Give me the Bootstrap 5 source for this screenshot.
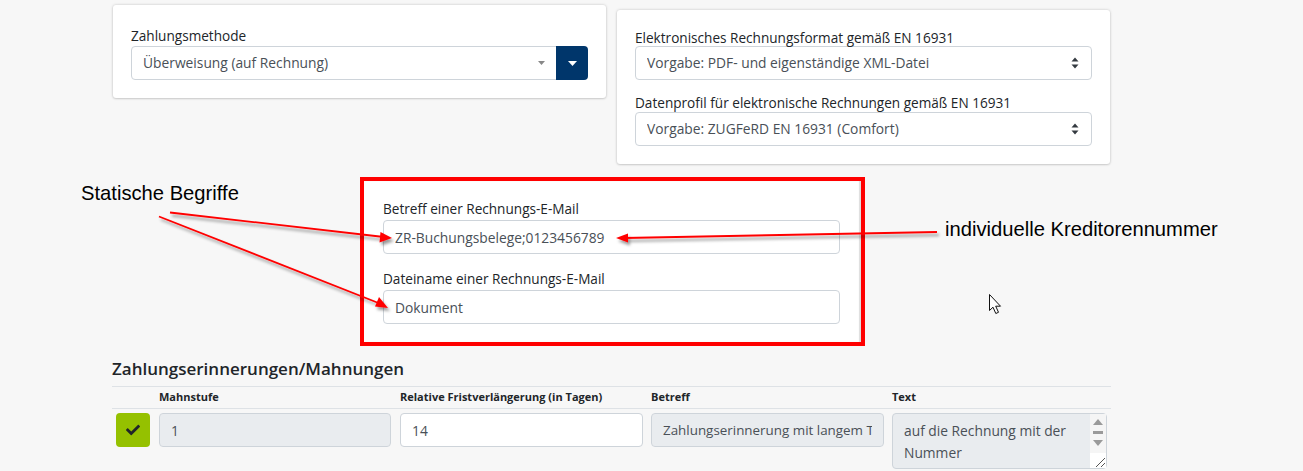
<!DOCTYPE html>
<html lang="de">
<head>
<meta charset="utf-8">
<title>Rechnungseinstellungen</title>
<link href="https://cdn.jsdelivr.net/npm/bootstrap@5.3.0/dist/css/bootstrap.min.css" rel="stylesheet">
<style>
html,body{height:471px;overflow:hidden}
body{background:#f7f7f7;font-family:"Open Sans","Noto Sans",sans-serif;font-size:13.6px;color:#212529;position:relative}
.page-wrap{width:999px;margin-left:112px}
.top-row{display:grid;grid-template-columns:493px 493px;column-gap:11px;align-items:start;margin-left:1px}
.pane{background:#fff;border:0;border-radius:3px;box-shadow:0 0 3px rgba(0,0,0,.2),0 1px 2px rgba(0,0,0,.1);padding:18px}
.pane-a{margin-top:5px;height:93px;padding-top:22px}
.pane-a .fld-label{margin-bottom:1px}
.pane-b{margin-top:10px;height:154px}
.pane-b .grp:first-child .fld-label{line-height:20px}
.fld-label{display:block;line-height:18px;margin:0;height:18px;font-size:13.6px;white-space:nowrap}
.ctl{height:34px;font-size:13.8px;line-height:20px;padding:6px 11px;color:#495057;border:1px solid #ced4da;border-radius:4px;background-color:#fff;box-shadow:none;font-family:inherit}
.ctl:disabled,.ctl[readonly].ctl-grey{background-color:#e9ecef;color:#495057;opacity:1}
.ctl-tight{font-size:13.4px}
select.ctl{padding-right:30px;background-size:8px 12px;background-position:right 12px center;background-repeat:no-repeat;background-image:url("data:image/svg+xml,%3csvg xmlns='http://www.w3.org/2000/svg' viewBox='0 0 8 12'%3e%3cpath fill='%23343a40' d='M4 0.5 7.500 4.500H.5zM4 11.500.5 7.500h7z'/%3e%3c/svg%3e")}
select.ctl-small{background-size:7px 4px;background-position:right 11px center;background-image:url("data:image/svg+xml,%3csvg xmlns='http://www.w3.org/2000/svg' viewBox='0 0 7 4'%3e%3cpath fill='%23888' d='M0 0h7L3.500 4z'/%3e%3c/svg%3e")}
.drop-btn{width:32px;height:34px;background:#00366b;border:0;border-radius:0 4px 4px 0;padding:0;display:flex;align-items:center;justify-content:center}
.drop-btn:hover{background:#00366b}
.frame{width:505px;height:169px;margin:13px 0 0 248px;border:4px solid #f00;background:#fff;padding:19px 21px 0 19px;box-shadow:inset -2px 0 1px #ddd}
.frame .fld-label{margin-bottom:2px}
.frame .grp{margin-bottom:16px}
.pane-b .grp{margin-bottom:14px}
.section-title{font-size:17px;font-weight:600;line-height:22px;margin:12px 0 6px;color:#212529;height:22px}
.rem-table{width:999px;table-layout:fixed;margin:0;--bs-table-bg:transparent;border-color:#dee2e6}
.rem-table th{font-size:11px;font-weight:700;line-height:16px;padding:2px 4px 3px;border-top:1px solid #dee2e6;border-bottom:1px solid #dee2e6;white-space:nowrap}
.rem-table td{padding:4px;border:0;vertical-align:top}
.rem-table td:nth-child(2){padding-right:5px}
.col-a{width:43px}.col-b{width:241px}.col-c{width:251px}.col-d{width:241px}
.ok-btn{width:34px;height:34px;margin-left:0;background:#95c100;border:0;border-radius:4px;padding:0;display:flex;align-items:center;justify-content:center}
.ok-btn:hover{background:#95c100}
.area-wrap{position:relative;width:215px;height:56px}
.area-wrap textarea{height:56px;width:215px;resize:none;overflow:hidden;padding:6px 30px 6px 11px;line-height:22px;background:#e9ecef}
.scroll-art{position:absolute;right:1px;top:1px;width:16px;height:54px}
.overlay{position:absolute;left:0;top:0;width:1303px;height:471px;pointer-events:none}
.note{position:absolute;font-family:"Liberation Sans",Arial,sans-serif;font-size:20.2px;line-height:22px;color:#000;white-space:nowrap}
.note-a{left:81px;top:182px}
.note-b{left:945px;top:218px}
</style>
</head>
<body>
<div class="page-wrap">
  <div class="top-row">
    <div class="pane pane-a">
      <label class="fld-label" for="zm">Zahlungsmethode</label>
      <div class="input-group flex-nowrap">
        <select id="zm" class="form-select ctl ctl-small"><option>Überweisung (auf Rechnung)</option></select>
        <button class="btn drop-btn" type="button" aria-label="Auswahl öffnen"><svg width="9" height="5" viewBox="0 0 9 5"><path fill="#fff" d="M0 0h9L4.500 5z"/></svg></button>
      </div>
    </div>
    <div class="pane pane-b">
      <div class="grp">
        <label class="fld-label" for="fmt">Elektronisches Rechnungsformat gemäß EN 16931</label>
        <select id="fmt" class="form-select ctl"><option>Vorgabe: PDF- und eigenständige XML-Datei</option></select>
      </div>
      <div class="grp">
        <label class="fld-label" for="prof">Datenprofil für elektronische Rechnungen gemäß EN 16931</label>
        <select id="prof" class="form-select ctl"><option>Vorgabe: ZUGFeRD EN 16931 (Comfort)</option></select>
      </div>
    </div>
  </div>

  <div class="frame">
    <div class="grp">
      <label class="fld-label" for="bet">Betreff einer Rechnungs-E-Mail</label>
      <input id="bet" class="form-control ctl" value="ZR-Buchungsbelege;0123456789">
    </div>
    <div class="grp">
      <label class="fld-label" for="dat">Dateiname einer Rechnungs-E-Mail</label>
      <input id="dat" class="form-control ctl" value="Dokument">
    </div>
  </div>

  <h5 class="section-title">Zahlungserinnerungen/Mahnungen</h5>
  <table class="table rem-table">
    <colgroup><col class="col-a"><col class="col-b"><col class="col-c"><col class="col-d"><col></colgroup>
    <thead><tr><th></th><th>Mahnstufe</th><th>Relative Fristverlängerung (in Tagen)</th><th>Betreff</th><th>Text</th></tr></thead>
    <tbody><tr>
      <td><button class="btn ok-btn" type="button" aria-label="Aktiv"><svg width="14" height="14" viewBox="0 0 512 512"><path fill="#212529" d="M173.900 439.400 7.500 273c-10-10-10-26.200 0-36.200l36.200-36.200c10-10 26.200-10 36.200 0L192 312.700 432.100 72.600c10-10 26.200-10 36.200 0l36.200 36.200c10 10 10 26.200 0 36.200L210.100 439.400c-10 10-26.200 10-36.200 0z"/></svg></button></td>
      <td><input class="form-control ctl ctl-grey" readonly value="1"></td>
      <td><input class="form-control ctl" value="14"></td>
      <td><input class="form-control ctl ctl-grey ctl-tight" readonly value="Zahlungserinnerung mit langem Text"></td>
      <td><div class="area-wrap">
        <textarea class="form-control ctl" readonly rows="2">auf die Rechnung mit der Nummer</textarea>
        <svg class="scroll-art" viewBox="0 0 16 54" aria-hidden="true">
          <rect width="16" height="54" fill="#fff"/>
          <rect x="0" y="0" width="16" height="39" fill="#f5f5f5"/>
          <path fill="#9a9a9a" d="M8 5l5 6H3z"/><rect x="3" y="17" width="10" height="3" fill="#9a9a9a"/><path fill="#9a9a9a" d="M3 26h10l-5 6z"/>
          <path stroke="#555" stroke-width="1" fill="none" d="M6 53 15 44M11 53 15 49"/>
        </svg>
      </div></td>
    </tr></tbody>
  </table>
</div>

<svg class="overlay" viewBox="0 0 1303 471" aria-hidden="true">
  <defs>
    <filter id="sh" x="-10%" y="-50%" width="120%" height="200%"><feDropShadow dx="2" dy="3" stdDeviation="1.500" flood-color="#000" flood-opacity=".4"/></filter>
  </defs>
  <g filter="url(#sh)">
    <g stroke="#f00" stroke-width="1.800" fill="none">
      <path d="M170 212.500 384 237"/>
      <path d="M159 216.500 381 304"/>
      <path d="M937 232 624 238"/>
    </g>
    <g fill="#f00">
      <path d="M392 238 379.500 242.500 380.500 232z"/>
      <path d="M388 308 375 306.500 379 297z"/>
      <path d="M616 238 628 233.500 628 242.500z"/>
    </g>
  </g>
  <path d="M989.500 294.500V310.500L993 307.200 995.800 313.500 998.500 312.300 995.700 306.200H1000.500z" fill="#fff" stroke="#111" stroke-width="1"/>
</svg>
<div class="note note-a">Statische Begriffe</div>
<div class="note note-b">individuelle Kreditorennummer</div>
</body>
</html>
